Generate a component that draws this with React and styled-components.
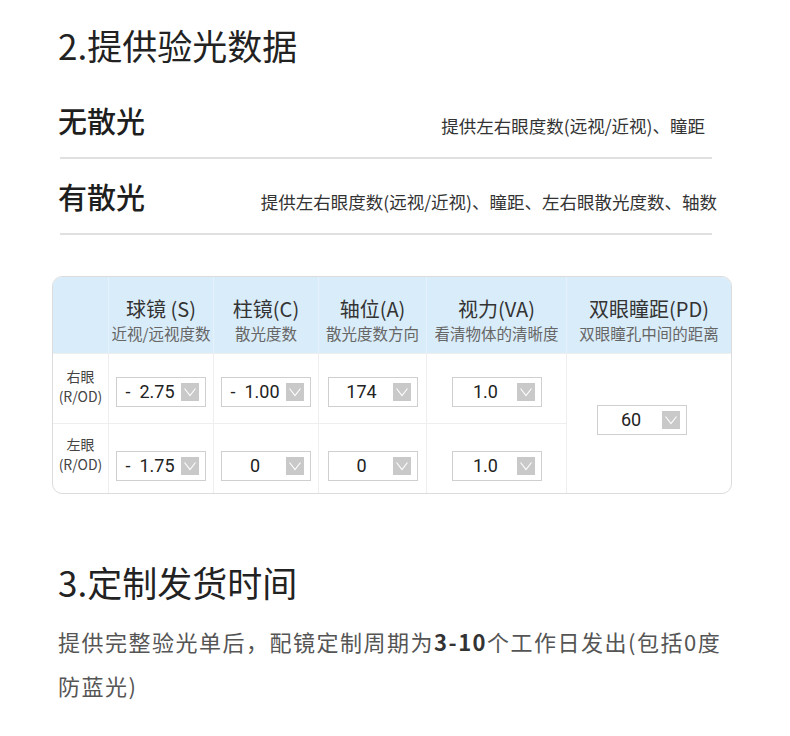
import React from 'react'
import styled, { createGlobalStyle } from 'styled-components'

const GlobalStyle = createGlobalStyle`
    body {
        margin: 0;
        background: #fff;
        font-family: "Noto Sans CJK SC", "Noto Sans", sans-serif;
        color: #222;
    }
`

const columns = [
    { title: '球镜 (S)', sub: '近视/远视度数' },
    { title: '柱镜(C)', sub: '散光度数' },
    { title: '轴位(A)', sub: '散光度数方向' },
    { title: '视力(VA)', sub: '看清物体的清晰度' },
    { title: '双眼瞳距(PD)', sub: '双眼瞳孔中间的距离' },
]

const eyes = [
    { label: '右眼', values: ['-  2.75', '-  1.00', '174', '1.0'], shift: 6 },
    { label: '左眼', values: ['-  1.75', '0', '0', '1.0'], shift: 14 },
]

const Arrow = () => (
    <ArrowBox>
        <svg width="18" height="18" viewBox="0 0 18 18">
            <polyline points="3.5,5.5 9,12.5 14.5,5.5" fill="none" stroke="#fff" strokeWidth="1.1" />
        </svg>
    </ArrowBox>
)

const Select = ({ value }) => (
    <SelectBox>
        <SelectValue>{value}</SelectValue>
        <Arrow />
    </SelectBox>
)

const App = () => {
    return (
        <>
            <GlobalStyle />
            <Page>
                <SectionTitle top={23}>2.提供验光数据</SectionTitle>

                <OptionRow>
                    <OptionName>无散光</OptionName>
                    <OptionDesc offset={7}>提供左右眼度数(远视/近视)、瞳距</OptionDesc>
                </OptionRow>
                <OptionRow>
                    <OptionName>有散光</OptionName>
                    <OptionDesc offset={-5}>提供左右眼度数(远视/近视)、瞳距、左右眼散光度数、轴数</OptionDesc>
                </OptionRow>

                <Table>
                    <HeadCell first />
                    {columns.map((c) => (
                        <HeadCell key={c.title}>
                            <HeadTitle>{c.title}</HeadTitle>
                            <HeadSub>{c.sub}</HeadSub>
                        </HeadCell>
                    ))}

                    {eyes.map((eye, i) => (
                        <React.Fragment key={eye.label}>
                            <LabelCell shift={eye.shift}>
                                <span>{eye.label}</span>
                                <span>(R/OD)</span>
                            </LabelCell>
                            {eye.values.map((v, j) => (
                                <BodyCell key={j} shift={eye.shift}>
                                    <Select value={v} />
                                </BodyCell>
                            ))}
                            {i === 0 && (
                                <PdCell>
                                    <Select value="60" />
                                </PdCell>
                            )}
                        </React.Fragment>
                    ))}
                </Table>

                <SectionTitle top={66}>3.定制发货时间</SectionTitle>
                <Paragraph>
                    提供完整验光单后，配镜定制周期为<b>3-10</b>个工作日发出(包括0度防蓝光)
                </Paragraph>
            </Page>
        </>
    )
}

export default App

const Page = styled.div`
    width: 790px;
    min-height: 736px;
    padding-left: 58px;
    box-sizing: border-box;
`
const SectionTitle = styled.h2`
    margin: ${({ top }) => top}px 0 0;
    font-size: 35px;
    line-height: 44px;
    font-weight: 400;
    color: #222;
`
const OptionRow = styled.div`
    width: 652px;
    height: 74px;
    margin-left: 2px;
    display: flex;
    align-items: center;
    justify-content: space-between;
    border-bottom: 2px solid #e0e0e0;
    &:first-of-type {
        margin-top: 16px;
    }
`
const OptionName = styled.div`
    margin-left: -2px;
    font-size: 29px;
    font-weight: 500;
    color: #1e1e1e;
`
const OptionDesc = styled.div`
    margin-top: 10px;
    margin-right: ${({ offset }) => offset}px;
    font-size: 17.5px;
    color: #333;
    white-space: nowrap;
`
const Table = styled.div`
    display: grid;
    grid-template-columns: 55px 105px 105px 108px 140px 165px;
    grid-template-rows: 76px 70px 70px;
    width: 680px;
    margin: 41px 0 0 -6px;
    border: 1px solid #dcdcdc;
    border-radius: 10px;
    overflow: hidden;
    box-sizing: border-box;
`
const HeadCell = styled.div`
    background: #d9ecf9;
    border-left: ${({ first }) => (first ? 'none' : '1px solid #e6f1fb')};
    display: flex;
    flex-direction: column;
    align-items: center;
    justify-content: center;
    padding-top: 10px;
    box-sizing: border-box;
`
const HeadTitle = styled.div`
    font-size: 20px;
    line-height: 26px;
    color: #333;
    white-space: nowrap;
`
const HeadSub = styled.div`
    font-size: 15.5px;
    line-height: 22px;
    color: #666;
    white-space: nowrap;
`
const BodyCell = styled.div`
    border-left: 1px solid #eee;
    border-top: 1px solid #eee;
    display: flex;
    align-items: center;
    justify-content: center;
    padding-top: ${({ shift }) => shift}px;
    box-sizing: border-box;
`
const LabelCell = styled.div`
    border-top: 1px solid #eee;
    display: flex;
    flex-direction: column;
    align-items: center;
    justify-content: center;
    padding-bottom: ${({ shift }) => (shift > 10 ? 10 : 5)}px;
    font-size: 14px;
    line-height: 20px;
    color: #444;
    box-sizing: border-box;
`
const PdCell = styled(BodyCell)`
    grid-column: 6;
    grid-row: 2 / span 2;
    padding-top: 0;
    padding-bottom: 8px;
    padding-left: 0;
    padding-right: 14px;
`
const SelectBox = styled.div`
    width: 90px;
    height: 30px;
    border: 1px solid #cfcfcf;
    background: #fff;
    display: flex;
    align-items: center;
    padding: 0 6px 0 2px;
    box-sizing: border-box;
`
const SelectValue = styled.div`
    flex: 1;
    text-align: center;
    font-family: Roboto, "Noto Sans", sans-serif;
    font-size: 18px;
    color: #222;
    white-space: pre;
`
const ArrowBox = styled.div`
    width: 18px;
    height: 18px;
    background: #c9c9c9;
    display: flex;
`
const Paragraph = styled.p`
    margin: 15px 0 0;
    width: 672px;
    font-size: 22px;
    line-height: 44px;
    letter-spacing: 1.5px;
    color: #555;
    b {
        color: #333;
        font-weight: 700;
    }
`
